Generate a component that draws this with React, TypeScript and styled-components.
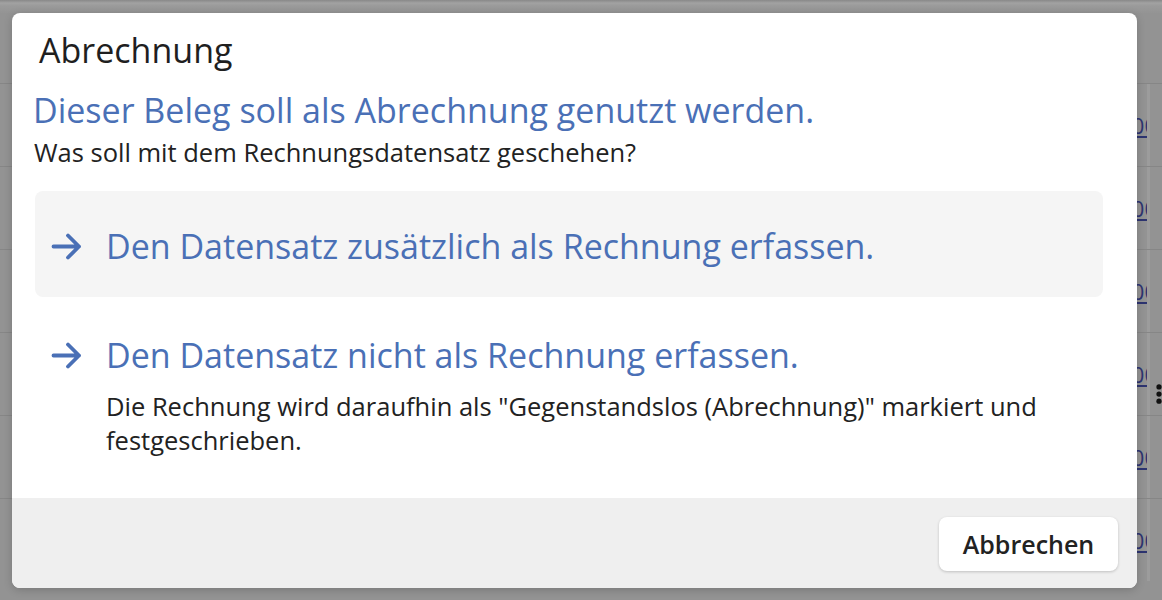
import React from "react";
import styled, {createGlobalStyle} from "styled-components";

const GlobalStyle = createGlobalStyle`
  html, body {
    margin: 0;
    padding: 0;
    background: #939393;
    font-family: "Open Sans", "Noto Sans", sans-serif;
  }
  * {
    box-sizing: border-box;
  }
`;

const Screen = styled.div`
  position: relative;
  width: 1162px;
  height: 600px;
  overflow: hidden;
`;

/* dimmed table behind the modal */
const Backdrop = styled.div`
  display: flex;
  flex-direction: column;
  height: 100%;
  background: #939393;
`;

const TopStrip = styled.div`
  height: 13px;
  background: linear-gradient(#888 0, #a2a2a2 3px, #9a9a9a 6px, #949494 13px);
`;

const HeaderRow = styled.div`
  height: 70px;
`;

const Row = styled.div`
  display: flex;
  height: 83px;
  border-top: 1px solid #868686;
  flex-shrink: 0;
`;

const Spacer = styled.div`
  flex: 1;
`;

const AmountCell = styled.div`
  width: 80px;
  overflow: hidden;
  display: flex;
  align-items: center;
  justify-content: flex-end;
  border-right: 3px solid #9c9c9c;
  font-size: 22px;
  color: #2d3470;
  white-space: nowrap;

  span {
    text-decoration: underline;
    margin-right: -10px;
  }
`;

const ActionCell = styled.div`
  width: 12px;
  flex-shrink: 0;
  display: flex;
  align-items: flex-start;
  padding: 48px 0 0 6px;
`;

const Modal = styled.div`
  position: absolute;
  left: 12px;
  top: 13px;
  width: 1125px;
  height: 575px;
  background: #fff;
  border-radius: 8px;
  overflow: hidden;
  display: flex;
  flex-direction: column;
  box-shadow: 0 2px 8px rgba(0, 0, 0, 0.18);
`;

const Body = styled.div`
  flex: 1;
  padding: 12px 34px 0 23px;
`;

const Title = styled.h1`
  margin: 0 0 0 4px;
  font-size: 34px;
  line-height: 50px;
  font-weight: 400;
  color: #1f1f1f;
`;

const Lead = styled.div`
  margin: 12px 0 0 -2px;
  font-size: 34px;
  line-height: 46px;
  color: #4a70b6;
`;

const Question = styled.div`
  margin: 2px 0 0 -1px;
  font-size: 25.5px;
  line-height: 34px;
  color: #222;
`;

const Options = styled.div`
  display: flex;
  flex-direction: column;
  margin-top: 22px;
`;

const Option = styled.div<{$active?: boolean}>`
  display: flex;
  align-items: flex-start;
  gap: 24px;
  padding: ${(p) => (p.$active ? "32px 16px 28px" : "35px 16px 20px")};
  border-radius: 8px;
  background: ${(p) => (p.$active ? "#f5f5f5" : "transparent")};
  cursor: pointer;
`;

const ArrowBox = styled.div`
  width: 31px;
  height: 46px;
  display: flex;
  align-items: center;
  flex-shrink: 0;
`;

const OptionText = styled.div`
  display: flex;
  flex-direction: column;
`;

const OptionLabel = styled.div`
  font-size: 34px;
  line-height: 46px;
  color: #4a70b6;
`;

const OptionHint = styled.div`
  margin-top: 11px;
  font-size: 25.5px;
  line-height: 34px;
  color: #222;
  max-width: 960px;
`;

const Footer = styled.div`
  height: 90px;
  background: #efefef;
  display: flex;
  align-items: center;
  justify-content: flex-end;
  padding: 0 19px 0 0;
`;

const CancelButton = styled.button`
  width: 179px;
  height: 54px;
  margin-top: 2px;
  border: none;
  border-radius: 8px;
  background: #fff;
  box-shadow: 0 1px 3px rgba(0, 0, 0, 0.2);
  font-family: inherit;
  font-size: 25px;
  font-weight: 600;
  color: #222;
  cursor: pointer;
`;

function Arrow(): JSX.Element {
  return (
    <svg width="31" height="27" viewBox="0 0 31 27" fill="none">
      <path
        d="M2.5 13.5H28M17 2.5L28 13.5L17 24.5"
        stroke="#4a70b6"
        strokeWidth="3.8"
        strokeLinecap="round"
        strokeLinejoin="round"
      />
    </svg>
  );
}

function Kebab(): JSX.Element {
  return (
    <svg width="8" height="26" viewBox="0 0 8 26">
      <circle cx="4" cy="3.5" r="3.5" fill="#111" />
      <circle cx="4" cy="13" r="3.5" fill="#111" />
      <circle cx="4" cy="22.5" r="3.5" fill="#111" />
    </svg>
  );
}

const rows = [0, 1, 2, 3, 4, 5];

export default function App(): JSX.Element {
  return (
    <Screen>
      <GlobalStyle />
      <Backdrop>
        <TopStrip />
        <HeaderRow />
        {rows.map((r) => (
          <Row key={r}>
            <Spacer />
            <AmountCell>
              <span>100,00</span>
            </AmountCell>
            <ActionCell>{r === 3 && <Kebab />}</ActionCell>
          </Row>
        ))}
      </Backdrop>

      <Modal role="dialog">
        <Body>
          <Title>Abrechnung</Title>
          <Lead>Dieser Beleg soll als Abrechnung genutzt werden.</Lead>
          <Question>Was soll mit dem Rechnungsdatensatz geschehen?</Question>
          <Options>
            <Option $active>
              <ArrowBox>
                <Arrow />
              </ArrowBox>
              <OptionText>
                <OptionLabel>
                  Den Datensatz zusätzlich als Rechnung erfassen.
                </OptionLabel>
              </OptionText>
            </Option>
            <Option>
              <ArrowBox>
                <Arrow />
              </ArrowBox>
              <OptionText>
                <OptionLabel>Den Datensatz nicht als Rechnung erfassen.</OptionLabel>
                <OptionHint>
                  Die Rechnung wird daraufhin als &quot;Gegenstandslos
                  (Abrechnung)&quot; markiert und festgeschrieben.
                </OptionHint>
              </OptionText>
            </Option>
          </Options>
        </Body>
        <Footer>
          <CancelButton>Abbrechen</CancelButton>
        </Footer>
      </Modal>
    </Screen>
  );
}
